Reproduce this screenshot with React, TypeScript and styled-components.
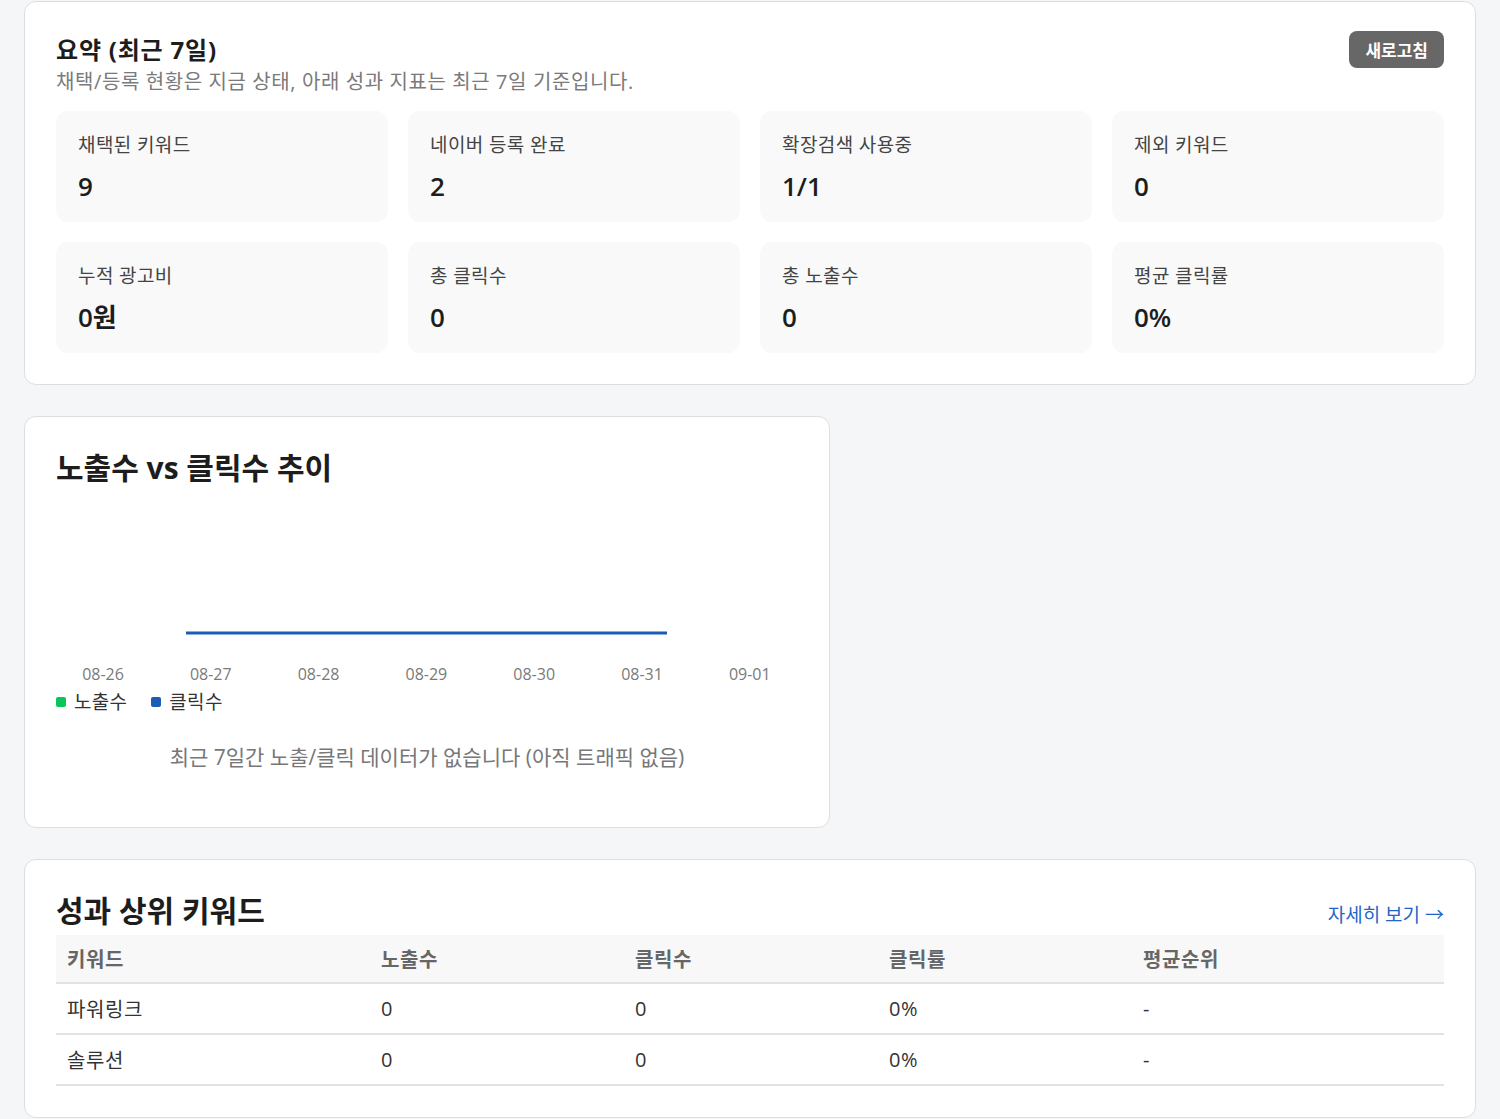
import styled, { createGlobalStyle } from 'styled-components';

const GlobalStyle = createGlobalStyle`
  body {
    margin: 0;
    background: #f5f6f8;
    font-family: "Open Sans", "Noto Sans CJK KR", sans-serif;
    color: #222;
  }
`;

const Page = styled.div`
  display: flex;
  flex-direction: column;
  align-items: flex-start;
  gap: 31px;
  padding: 1px 24px 24px;
`;

const Card = styled.section<{ $width?: number; $top?: number }>`
  box-sizing: border-box;
  width: ${p => (p.$width ? `${p.$width}px` : '100%')};
  background: #fff;
  border: 1px solid #dedede;
  border-radius: 12px;
  padding: ${p => p.$top ?? 31}px 31px 31px;
`;

const HeaderRow = styled.div<{ $align?: string }>`
  display: flex;
  justify-content: space-between;
  align-items: ${p => p.$align || 'flex-start'};
`;

const SummaryTitle = styled.h2`
  margin: 0;
  font-size: 24px;
  line-height: 30px;
  font-weight: 700;
  letter-spacing: 0.8px;
  color: #1d1d1d;
`;

const Subtitle = styled.p`
  margin: 3px 0 0;
  font-size: 20px;
  line-height: 28px;
  letter-spacing: 0.6px;
  color: #7a7a7a;
`;

const RefreshButton = styled.button`
  font-family: inherit;
  background: #676767;
  color: #fff;
  border: none;
  border-radius: 8px;
  height: 37px;
  padding: 0 16px;
  margin-top: -4px;
  font-size: 17px;
  font-weight: 700;
  cursor: pointer;
`;

const StatGrid = styled.div`
  display: grid;
  grid-template-columns: repeat(4, 1fr);
  gap: 20px;
  margin-top: 15px;
`;

const StatBox = styled.div`
  background: #f9f9f9;
  border-radius: 12px;
  height: 111px;
  box-sizing: border-box;
  padding: 21px 22px 0;
`;

const StatLabel = styled.div`
  font-size: 19px;
  line-height: 27px;
  letter-spacing: 0.4px;
  color: #444;
`;

const StatValue = styled.div`
  margin-top: 10px;
  font-size: 26px;
  line-height: 34px;
  font-weight: 600;
  color: #1d1d1d;
`;

const SectionTitle = styled.h2`
  margin: 0;
  font-size: 30px;
  line-height: 38px;
  font-weight: 700;
  color: #1d1d1d;
`;

const ChartBox = styled.div`
  margin-top: 10px;

  svg {
    display: block;
  }
`;

const Legend = styled.div`
  display: flex;
  gap: 24px;
  margin-top: 2px;
`;

const LegendItem = styled.span<{ $color: string }>`
  display: inline-flex;
  align-items: center;
  gap: 8px;
  font-size: 19px;
  line-height: 26px;
  letter-spacing: 0.3px;
  color: #333;

  &::before {
    content: '';
    width: 10px;
    height: 10px;
    border-radius: 2px;
    background: ${p => p.$color};
  }
`;

const EmptyNote = styled.p`
  margin: 27px 0 24px;
  text-align: center;
  font-size: 21px;
  line-height: 30px;
  color: #777;
`;

const MoreLink = styled.a`
  font-size: 19px;
  line-height: 26px;
  color: #1f66c7;
  text-decoration: none;
  margin-bottom: 2px;
`;

const Table = styled.table`
  width: 100%;
  margin-top: 5px;
  border-collapse: collapse;
  table-layout: fixed;
  font-size: 20px;
  letter-spacing: 0.6px;
`;

const Th = styled.th<{ $w?: number }>`
  width: ${p => (p.$w ? `${p.$w}px` : 'auto')};
  background: #f8f8f8;
  text-align: left;
  font-weight: 700;
  color: #666;
  height: 47px;
  padding: 0 11px;
  border-bottom: 2px solid #e2e2e2;
`;

const Td = styled.td`
  height: 49px;
  padding: 0 11px;
  color: #333;
  border-bottom: 2px solid #e2e2e2;
`;

const stats = [
  { label: '채택된 키워드', value: '9' },
  { label: '네이버 등록 완료', value: '2' },
  { label: '확장검색 사용중', value: '1/1' },
  { label: '제외 키워드', value: '0' },
  { label: '누적 광고비', value: '0원' },
  { label: '총 클릭수', value: '0' },
  { label: '총 노출수', value: '0' },
  { label: '평균 클릭률', value: '0%' },
];

const days = ['08-26', '08-27', '08-28', '08-29', '08-30', '08-31', '09-01'];

const keywords = [
  { name: '파워링크', imp: 0, clicks: 0, ctr: '0%', rank: '-' },
  { name: '솔루션', imp: 0, clicks: 0, ctr: '0%', rank: '-' },
];

// 7일치 추이 차트 (데이터 없음 상태)
const TrendChart = () => (
  <svg width="742" height="190" viewBox="0 0 742 190">
    <line x1="130" y1="136" x2="611" y2="136" stroke="#1d5cb4" strokeWidth="3" />
    {days.map((d, i) => (
      <text
        key={d}
        x={47 + i * 107.8}
        y={183}
        textAnchor="middle"
        fontSize="16"
        fill="#7a7a7a"
        fontFamily='"Open Sans", sans-serif'
      >
        {d}
      </text>
    ))}
  </svg>
);

export default function App() {
  return (
    <>
      <GlobalStyle />
      <Page>
        <Card $top={33}>
          <HeaderRow>
            <div>
              <SummaryTitle>요약 (최근 7일)</SummaryTitle>
              <Subtitle>채택/등록 현황은 지금 상태, 아래 성과 지표는 최근 7일 기준입니다.</Subtitle>
            </div>
            <RefreshButton>새로고침</RefreshButton>
          </HeaderRow>
          <StatGrid>
            {stats.map(s => (
              <StatBox key={s.label}>
                <StatLabel>{s.label}</StatLabel>
                <StatValue>{s.value}</StatValue>
              </StatBox>
            ))}
          </StatGrid>
        </Card>

        <Card $width={806} $top={32}>
          <SectionTitle>노출수 vs 클릭수 추이</SectionTitle>
          <ChartBox>
            <TrendChart />
          </ChartBox>
          <Legend>
            <LegendItem $color="#0ac65a">노출수</LegendItem>
            <LegendItem $color="#1d5cb4">클릭수</LegendItem>
          </Legend>
          <EmptyNote>최근 7일간 노출/클릭 데이터가 없습니다 (아직 트래픽 없음)</EmptyNote>
        </Card>

        <Card $top={32}>
          <HeaderRow $align="flex-end">
            <SectionTitle>성과 상위 키워드</SectionTitle>
            <MoreLink href="#">자세히 보기 →</MoreLink>
          </HeaderRow>
          <Table>
            <thead>
              <tr>
                <Th $w={292}>키워드</Th>
                <Th $w={232}>노출수</Th>
                <Th $w={232}>클릭수</Th>
                <Th $w={232}>클릭률</Th>
                <Th>평균순위</Th>
              </tr>
            </thead>
            <tbody>
              {keywords.map(k => (
                <tr key={k.name}>
                  <Td>{k.name}</Td>
                  <Td>{k.imp}</Td>
                  <Td>{k.clicks}</Td>
                  <Td>{k.ctr}</Td>
                  <Td>{k.rank}</Td>
                </tr>
              ))}
            </tbody>
          </Table>
        </Card>
      </Page>
    </>
  );
}
